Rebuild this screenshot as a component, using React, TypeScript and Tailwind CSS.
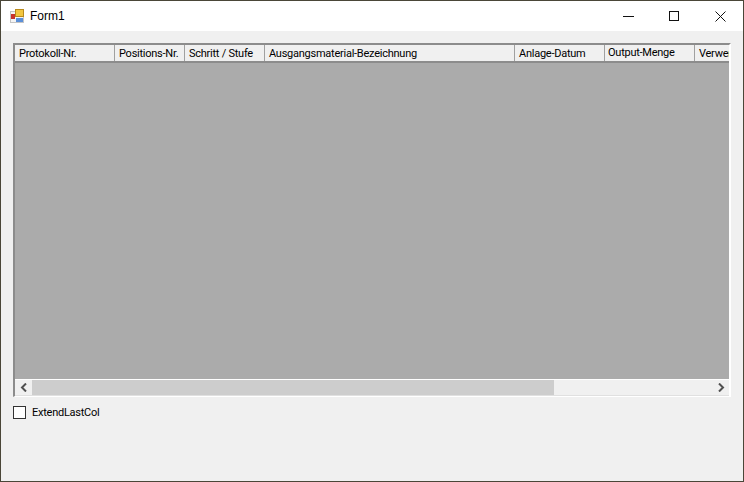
import React from "react";

const columns = [
  { label: "Protokoll-Nr.", width: "w-[100px] pl-[4px] pt-px" },
  { label: "Positions-Nr.", width: "w-[70px] pl-[4px] pt-px" },
  { label: "Schritt / Stufe", width: "w-[80px] pl-[4px] pt-px" },
  { label: "Ausgangsmaterial-Bezeichnung", width: "w-[250px] pl-[4px] pt-px" },
  { label: "Anlage-Datum", width: "w-[90px] pl-[4px] pt-px" },
  { label: "Output-Menge", width: "w-[90px] pl-[3px]" },
  { label: "Verwendung", width: "w-[90px] pl-[4px] pt-px" },
];

const FormIcon = () => (
  <svg width="14" height="14" viewBox="0 0 14 14" className="shrink-0">
    <rect x="0.5" y="2.5" width="13" height="11" fill="#f4f4f4" stroke="#c4c4c4" />
    <rect x="5.5" y="0.5" width="8" height="7" fill="#f2c640" stroke="#b98a1c" />
    <rect x="1" y="5" width="4" height="5" fill="#c8322c" />
    <rect x="6" y="9" width="7" height="4" fill="#5b8fd8" />
  </svg>
);

const WindowButtons = () => (
  <div className="ml-auto flex h-full items-center">
    <div className="flex w-[46px] justify-center">
      <svg width="11" height="11" viewBox="0 0 11 11">
        <path d="M0 5.5H11" stroke="#111111" fill="none" />
      </svg>
    </div>
    <div className="flex w-[46px] justify-center">
      <svg width="11" height="11" viewBox="0 0 11 11">
        <rect x="0.5" y="0.5" width="9" height="9" stroke="#111111" fill="none" />
      </svg>
    </div>
    <div className="flex w-[46px] justify-center">
      <svg width="11" height="11" viewBox="0 0 11 11">
        <path d="M0.5 0.5L10.5 10.5M10.5 0.5L0.5 10.5" stroke="#111111" fill="none" />
      </svg>
    </div>
  </div>
);

const Arrow = ({ d }: { d: string }) => (
  <svg width="8" height="9" viewBox="0 0 8 9">
    <path d={d} stroke="#505050" strokeWidth="2" fill="none" />
  </svg>
);

export default function App() {
  return (
    <div className="w-[744px] h-[482px] overflow-hidden bg-[#4a4638] p-px font-['Roboto',sans-serif] text-[#000000]">
      <div className="flex flex-col h-full bg-[#f0f0f0]">
        <div className="flex items-center h-[30px] bg-white shrink-0">
          <div className="ml-[9px]"><FormIcon /></div>
          <span className="ml-[6px] text-[12px] font-['Liberation_Sans',sans-serif]">Form1</span>
          <WindowButtons />
        </div>

        <div className="mt-[12px] ml-[12px] w-[718px] h-[354px] flex flex-col overflow-hidden border-t-2 border-l-2 border-t-[#8c8c8c] border-l-[#8c8c8c] border-r-2 border-b border-r-white border-b-white bg-[#ababab]">
          <div className="flex h-[16px] shrink-0 border-b-2 border-b-[#8c8c8c] box-content bg-[#f0f0f0]">
            {columns.map((c) => (
              <div
                key={c.label}
                className={`${c.width} shrink-0 border-r border-r-[#a0a0a0] text-[11px] leading-[16px] tracking-[-0.25px] whitespace-nowrap overflow-hidden`}
              >
                {c.label}
              </div>
            ))}
          </div>
          <div className="flex-1" />
          <div className="flex h-[15px] shrink-0 items-center bg-[#f0f0f0] border-t border-t-white border-b border-b-[#e0e0e0] box-content">
            <div className="flex w-[17px] justify-center"><Arrow d="M6 0.5L2 4.5L6 8.5" /></div>
            <div className="w-[522px] h-full bg-[#cdcdcd]" />
            <div className="ml-auto flex w-[17px] justify-center"><Arrow d="M2 0.5L6 4.5L2 8.5" /></div>
          </div>
        </div>

        <div className="mt-[8px] ml-[12px] flex items-center">
          <div className="h-[13px] w-[13px] border border-[#333333] bg-white" />
          <span className="ml-[6px] pt-px text-[11px] leading-[13px] tracking-[-0.25px]">ExtendLastCol</span>
        </div>
      </div>
    </div>
  );
}
